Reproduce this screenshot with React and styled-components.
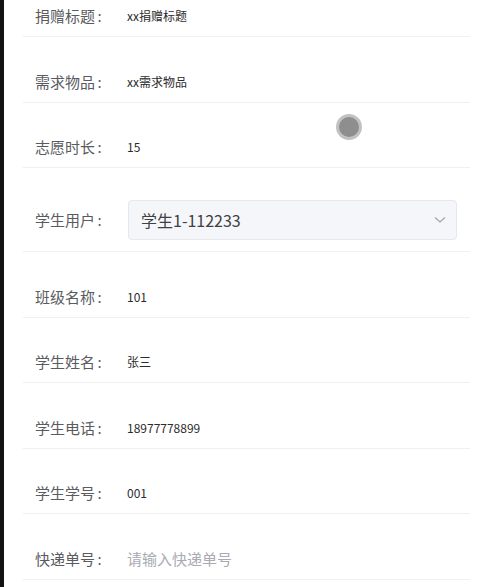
import React from "react";
import styled, { createGlobalStyle } from "styled-components";

const Global = createGlobalStyle`
  html, body { margin: 0; padding: 0; background: #ffffff; }
  body { font-family: "Noto Sans CJK SC", "Noto Sans", sans-serif; }
  * { box-sizing: border-box; }
`;

const Page = styled.div`
  position: relative;
  display: flex;
  width: 487px;
  height: 587px;
  overflow: hidden;
  background: #ffffff;
`;

const Edge = styled.div`
  width: 4px;
  flex: none;
  background: #121212;
`;

const Main = styled.div`
  flex: 1;
  padding: 0 17px 0 19px;
`;

const Form = styled.div`
  display: flex;
  flex-direction: column;
  margin-top: -28.5px;
`;

const Row = styled.div`
  display: flex;
  align-items: flex-end;
  height: ${(p) => (p.$tall ? "84px" : "65.5px")};
  padding: 0 13px ${(p) => (p.$tall ? "11px" : "8px")} 12px;
  border-bottom: 1px solid #eef0f3;
`;

const Label = styled.div`
  width: 92px;
  flex: none;
  display: flex;
  font-size: 15px;
  line-height: 24px;
  color: #595b60;
  margin-bottom: ${(p) => (p.$tall ? "8px" : "0")};
  white-space: nowrap;
`;

const Colon = styled.span`
  margin-left: 2.5px;
`;

const Value = styled.div`
  font-size: 12px;
  line-height: 24px;
  color: #2b2b2b;
`;

const Placeholder = styled.div`
  font-size: 15px;
  line-height: 24px;
  color: #a8abb2;
`;

const Select = styled.div`
  flex: 1;
  height: 40px;
  margin-left: 1px;
  display: flex;
  align-items: center;
  justify-content: space-between;
  padding: 0 10px 0 12px;
  background: #f5f6fa;
  border: 1px solid #e6e8ee;
  border-radius: 4px;
  font-size: 16px;
  color: #3f4044;
`;

const Chevron = styled.svg`
  width: 12px;
  height: 8px;
  flex: none;
`;

const Touch = styled.div`
  position: absolute;
  left: 336px;
  top: 114px;
  width: 26px;
  height: 26px;
  border-radius: 50%;
  background: #8e8e8e;
  border: 3px solid #c2c2c2;
`;

const rows = [
  { label: "捐赠标题", value: "xx捐赠标题" },
  { label: "需求物品", value: "xx需求物品" },
  { label: "志愿时长", value: "15" },
  { label: "学生用户", select: "学生1-112233" },
  { label: "班级名称", value: "101" },
  { label: "学生姓名", value: "张三" },
  { label: "学生电话", value: "18977778899" },
  { label: "学生学号", value: "001" },
  { label: "快递单号", placeholder: "请输入快递单号" },
];

export default function App() {
  return (
    <>
      <Global />
      <Page>
        <Edge />
        <Main>
          <Form>
            {rows.map((r) => (
              <Row key={r.label} $tall={!!r.select}>
                <Label $tall={!!r.select}>
                  {r.label}
                  <Colon>:</Colon>
                </Label>
                {r.select ? (
                  <Select>
                    <span>{r.select}</span>
                    <Chevron viewBox="0 0 12 8">
                      <path d="M1 1.5 L6 6 L11 1.5" fill="none" stroke="#a0a3aa" strokeWidth="1.2" />
                    </Chevron>
                  </Select>
                ) : r.placeholder ? (
                  <Placeholder>{r.placeholder}</Placeholder>
                ) : (
                  <Value>{r.value}</Value>
                )}
              </Row>
            ))}
          </Form>
        </Main>
        <Touch />
      </Page>
    </>
  );
}
